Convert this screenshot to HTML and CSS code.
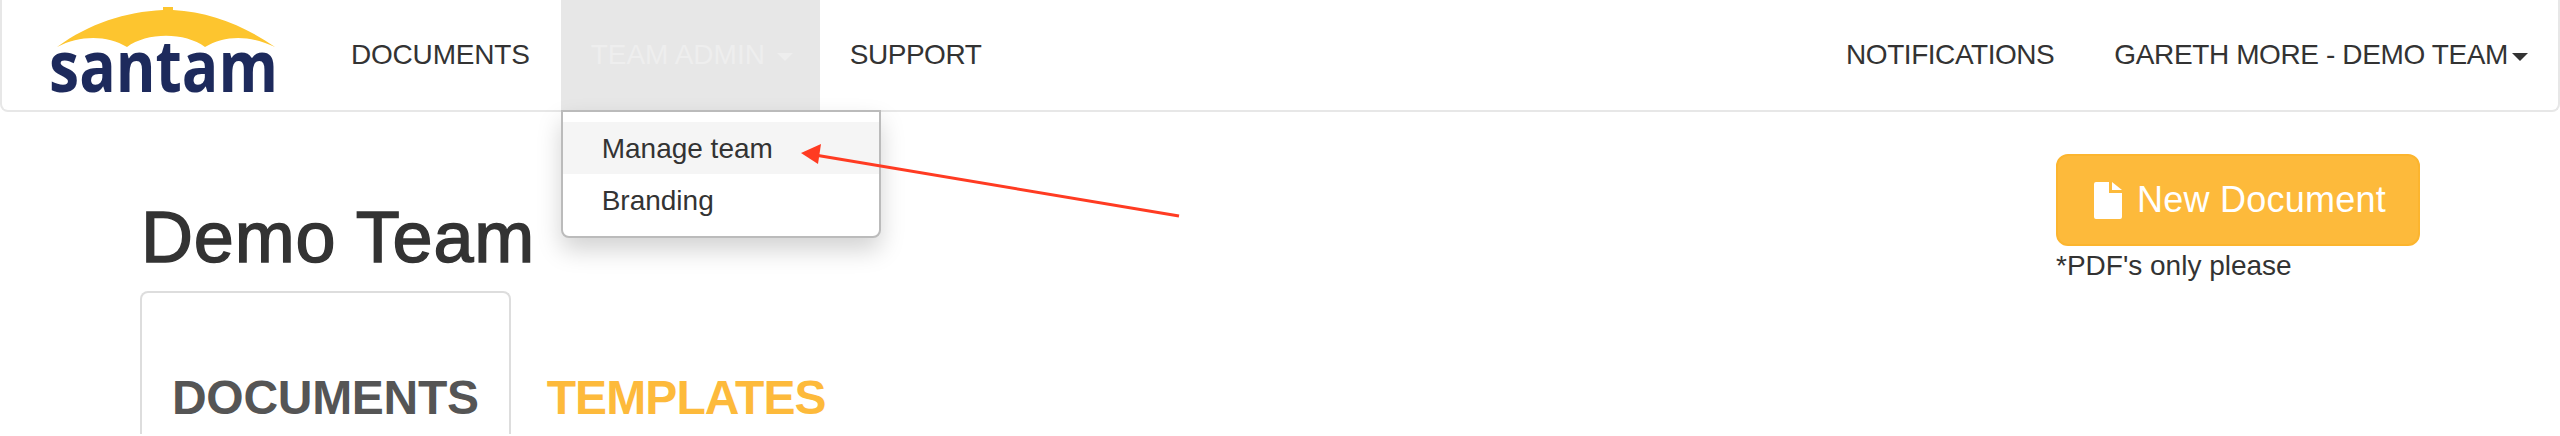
FILE: index.html
```html
<!DOCTYPE html>
<html lang="en">
<head>
    <meta charset="UTF-8">
    <meta name="viewport" content="width=device-width, initial-scale=1.0">
    <title>Demo Team</title>
    <link rel="stylesheet" href="styles.css">
</head>
<body>
    <nav class="navbar">
        <a href="#" class="brand">
            <svg class="logo" viewBox="0 0 230 90" aria-label="Santam">
                <path class="logo-sun" d="M7 41C40 17 75 6 113 4V1h10v3C160 6 195 20 225 41C200 29 175 29 155 41C135 26 97 26 77 41C57 29 30 29 7 41z"/>
                <text class="logo-text" x="-1" y="86" textLength="229" lengthAdjust="spacingAndGlyphs">santam</text>
            </svg>
        </a>
        <ul class="nav-list">
            <li><a href="#" class="nav-link nav-link-docs">DOCUMENTS</a></li>
            <li class="dropdown">
                <a href="#" class="nav-link nav-link-open">TEAM ADMIN <span class="caret"></span></a>
                <ul class="dropdown-menu">
                    <li><a href="#" class="dropdown-item dropdown-item-hover">Manage team</a></li>
                    <li><a href="#" class="dropdown-item">Branding</a></li>
                </ul>
            </li>
            <li><a href="#" class="nav-link">SUPPORT</a></li>
        </ul>
        <ul class="nav-list nav-right">
            <li><a href="#" class="nav-link">NOTIFICATIONS</a></li>
            <li><a href="#" class="nav-link nav-link-user">GARETH MORE - DEMO TEAM<span class="caret caret-user"></span></a></li>
        </ul>
    </nav>

    <main class="content">
        <div class="team-col">
            <h1>Demo Team</h1>
            <ul class="tabs">
                <li><a href="#" class="tab tab-active">DOCUMENTS</a></li>
                <li><a href="#" class="tab">TEMPLATES</a></li>
            </ul>
        </div>
        <div class="upload-col">
            <button class="btn-new" type="button">
                <svg class="file-icon" viewBox="0 0 28 37"><path d="M2 0h13v11h13v24a2 2 0 0 1-2 2H2a2 2 0 0 1-2-2V2a2 2 0 0 1 2-2zM18 0l10 8H18z"/></svg>
                New Document
            </button>
            <p class="upload-note">*PDF's only please</p>
        </div>
    </main>

    <svg class="arrow" viewBox="0 0 2560 436">
        <line x1="1179" y1="216" x2="815" y2="155"/>
        <path d="M801 153l20-9-3 20z"/>
    </svg>
</body>
</html>
```

FILE: styles.css
```css
* {
    margin: 0;
    padding: 0;
    box-sizing: border-box;
    font-family: 'Liberation Sans', Arial, sans-serif;
}

html, body {
    height: 100%;
    overflow: hidden;
}

body {
    background: #fff;
    color: #333;
    font-size: 28px;
}

ul {
    list-style: none;
}

a {
    text-decoration: none;
    color: inherit;
}

.navbar {
    display: flex;
    height: 112px;
    border: 2px solid #e7e7e7;
    border-top: none;
    border-radius: 0 0 8px 8px;
}

.brand {
    display: block;
    width: 319px;
    padding: 6px 0 0 48px;
}

.logo {
    display: block;
    width: 230px;
    height: 90px;
    overflow: visible;
}

.logo-sun {
    fill: #fdc52f;
}

.logo-text {
    fill: #1d2a5c;
    font-family: 'Open Sans', sans-serif;
    font-weight: 700;
    font-size: 72px;
}

.nav-list {
    display: flex;
}

.nav-right {
    margin-left: auto;
}

.nav-link {
    display: block;
    height: 110px;
    padding: 35px 30px 0;
    line-height: 40px;
    letter-spacing: -.45px;
    color: #333;
}

.nav-link-docs {
    padding-right: 31px;
    letter-spacing: -.2px;
}

.nav-link-open {
    padding-right: 27px;
    background: #e7e7e7;
    letter-spacing: 0;
    color: #eee;
}

.nav-link-user {
    letter-spacing: -.38px;
}

.caret {
    display: inline-block;
    margin-left: 4px;
    vertical-align: middle;
    border-top: 8px solid;
    border-left: 8px solid transparent;
    border-right: 8px solid transparent;
}

.dropdown {
    position: relative;
}

.dropdown-menu {
    position: absolute;
    top: 100%;
    left: 0;
    width: 320px;
    padding: 10px 0;
    background: #fff;
    border: 2px solid #bbb;
    border-radius: 0 0 8px 8px;
    box-shadow: 0 12px 24px rgba(0, 0, 0, .175);
}

.dropdown-item {
    display: block;
    padding: 7px 39px 5px;
    line-height: 40px;
    color: #333;
}

.dropdown-item-hover {
    background: #f5f5f5;
}

.content {
    display: flex;
    justify-content: space-between;
    padding: 0 140px;
}

h1 {
    margin-top: 85px;
    padding-left: 1px;
    font-size: 72px;
    font-weight: 400;
    line-height: 80px;
    letter-spacing: .8px;
    -webkit-text-stroke: 1.5px #333;
}

.tabs {
    display: flex;
    margin-top: 14px;
}

.tab {
    display: block;
    margin-right: 4px;
    padding: 78px 30px 10px;
    border: 2px solid transparent;
    border-bottom: none;
    border-radius: 8px 8px 0 0;
    font-size: 48px;
    font-weight: 700;
    line-height: 53px;
    letter-spacing: -.9px;
    color: #fdba3b;
}

.tab-active {
    border-color: #ddd;
    letter-spacing: -.3px;
    color: #555;
}

.upload-col {
    width: 364px;
    padding-top: 42px;
}

.btn-new {
    display: flex;
    align-items: center;
    width: 100%;
    height: 92px;
    padding: 0 36px;
    background: #fdba3b;
    border: 2px solid #fcb52e;
    border-radius: 12px;
    color: #fff;
    font-size: 36px;
    letter-spacing: .25px;
    white-space: nowrap;
    cursor: pointer;
}

.file-icon {
    flex: none;
    width: 28px;
    height: 37px;
    margin-right: 15px;
    fill: #fff;
}

.upload-note {
    line-height: 40px;
}

.arrow {
    position: absolute;
    left: 0;
    top: 0;
    width: 2560px;
    height: 436px;
    pointer-events: none;
}

.arrow line {
    stroke: #ff3b22;
    stroke-width: 3;
}

.arrow path {
    fill: #ff3b22;
}
```
